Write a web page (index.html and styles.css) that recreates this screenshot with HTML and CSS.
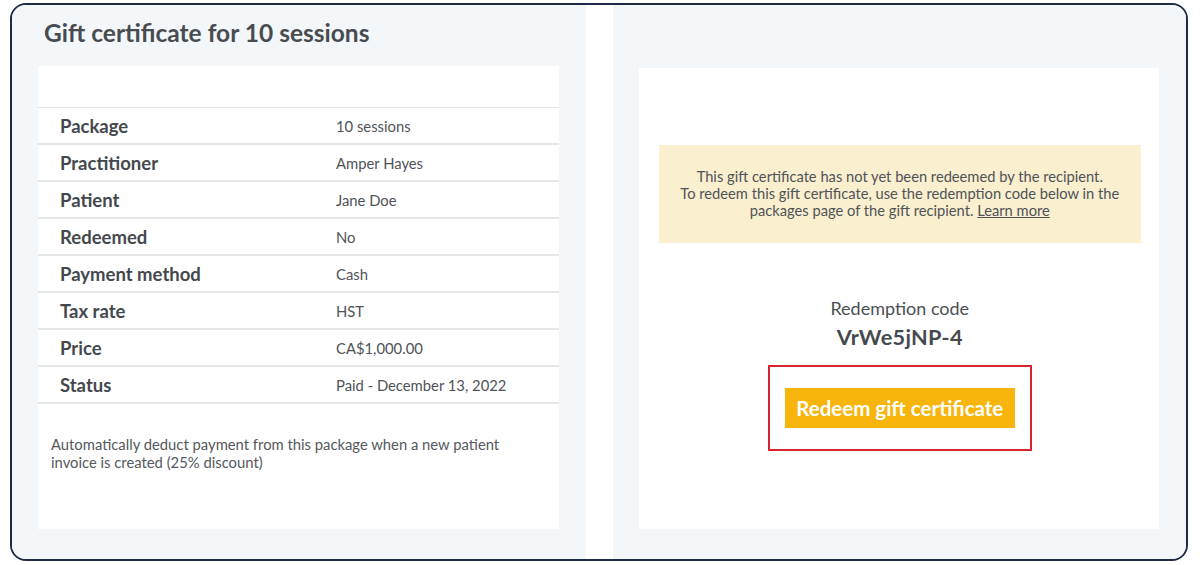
FILE: index.html
```html
<!DOCTYPE html>
<html lang="en">
<head>
    <meta charset="UTF-8">
    <meta name="viewport" content="width=device-width, initial-scale=1.0">
    <title>Gift certificate</title>
    <link rel="stylesheet" href="styles.css">
</head>
<body>
    <div class="frame">
        <!-- Left side: certificate details -->
        <section class="panel">
            <h1 class="panel-title">Gift certificate for 10 sessions</h1>
            <div class="card details-card">
                <div class="card-head"></div>
                <div class="detail-row"><span class="detail-label">Package</span><span class="detail-value">10 sessions</span></div>
                <div class="detail-row"><span class="detail-label">Practitioner</span><span class="detail-value">Amper Hayes</span></div>
                <div class="detail-row"><span class="detail-label">Patient</span><span class="detail-value">Jane Doe</span></div>
                <div class="detail-row"><span class="detail-label">Redeemed</span><span class="detail-value">No</span></div>
                <div class="detail-row"><span class="detail-label">Payment method</span><span class="detail-value">Cash</span></div>
                <div class="detail-row"><span class="detail-label">Tax rate</span><span class="detail-value">HST</span></div>
                <div class="detail-row"><span class="detail-label">Price</span><span class="detail-value">CA$1,000.00</span></div>
                <div class="detail-row"><span class="detail-label">Status</span><span class="detail-value">Paid - December 13, 2022</span></div>
                <p class="auto-deduct">Automatically deduct payment from this package when a new patient invoice is created (25% discount)</p>
            </div>
        </section>

        <!-- Right side: redemption -->
        <section class="panel">
            <div class="card redeem-card">
                <div class="notice">
                    This gift certificate has not yet been redeemed by the recipient.<br>
                    To redeem this gift certificate, use the redemption code below in the packages page of the gift recipient. <a href="#" class="notice-link">Learn more</a>
                </div>
                <div class="code-label">Redemption code</div>
                <div class="code-value">VrWe5jNP-4</div>
                <div class="highlight-box">
                    <button class="redeem-btn">Redeem gift certificate</button>
                </div>
            </div>
        </section>
    </div>
</body>
</html>
```

FILE: styles.css
```css
/* Page basics */
body {
    margin: 0;
    background-color: #ffffff;
    font-family: "Lato", "Open Sans", sans-serif;
    color: #454a50;
}

/* Rounded outer frame */
.frame {
    margin: 3px 12px 4px 10px;
    height: 558px;
    box-sizing: border-box;
    border: 2px solid #1f2a47;
    border-radius: 16px;
    overflow: hidden;
    display: grid;
    grid-template-columns: 1fr 1fr;
    gap: 27px;
}

.panel {
    background-color: #f4f7f9;
    padding: 13px 27px 30px 26px;
    display: flex;
    flex-direction: column;
}

.panel-title {
    margin: 0 0 18px 6px;
    font-size: 24.5px;
    font-weight: 700;
    color: #484c51;
    line-height: 30px;
}

.card {
    background-color: #ffffff;
    flex: 1;
}

/* Details table */
.card-head {
    height: 41px;
    border-bottom: 1px solid #e2e5e8;
}

.detail-row {
    display: flex;
    align-items: center;
    height: 35px;
    border-bottom: 2px solid #e4e7ea;
}

.detail-label {
    width: 276px;
    padding-left: 22px;
    font-size: 18.5px;
    font-weight: 700;
    color: #44484d;
}

.detail-value {
    font-size: 14.8px;
    color: #4f5358;
}

.auto-deduct {
    margin: 31px 0 0 13px;
    width: 470px;
    font-size: 14.8px;
    line-height: 18px;
    color: #54585d;
}

/* Redemption side */
.redeem-card {
    margin-top: 50px;
    padding: 77px 18px 0 20px;
    display: flex;
    flex-direction: column;
    align-items: center;
}

.notice {
    align-self: stretch;
    background-color: #faefcf;
    padding: 23px 12px 24px;
    text-align: center;
    font-size: 14.7px;
    line-height: 17px;
    color: #4f5358;
}

.notice-link {
    color: #4f5358;
    text-decoration: underline;
}

.code-label {
    margin-top: 54px;
    font-size: 18px;
    color: #4b4f54;
}

.code-value {
    margin-top: 5px;
    font-size: 21.7px;
    font-weight: 700;
    color: #45494e;
    letter-spacing: 0.3px;
}

.highlight-box {
    margin-top: 15px;
    width: 264px;
    height: 86px;
    box-sizing: border-box;
    border: 2px solid #d5262b;
    display: flex;
    align-items: center;
    justify-content: center;
}

.redeem-btn {
    width: 230px;
    height: 40px;
    border: none;
    background-color: #f7b50c;
    color: #ffffff;
    font-family: inherit;
    font-size: 20.5px;
    font-weight: 700;
    cursor: pointer;
}
```
